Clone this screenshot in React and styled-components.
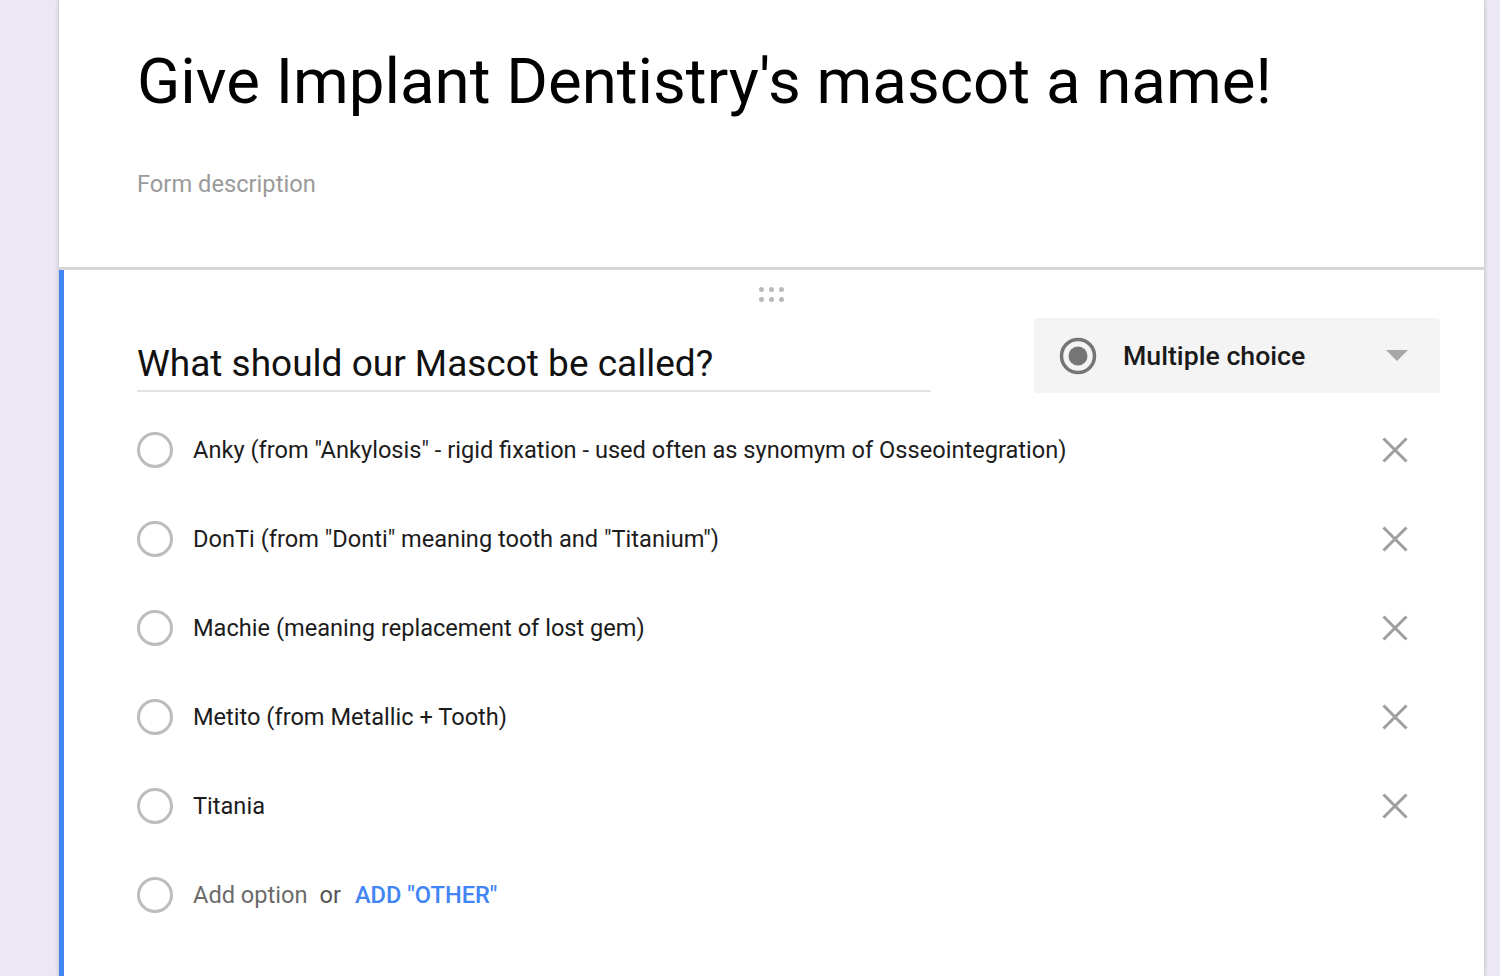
import React from "react";
import styled, { createGlobalStyle } from "styled-components";

const GlobalStyle = createGlobalStyle`
  html, body {
    margin: 0;
    padding: 0;
    background: #ebe7f4;
    font-family: Roboto, "Liberation Sans", Arial, sans-serif;
    overflow: hidden;
  }
`;

const options = [
  'Anky (from "Ankylosis" - rigid fixation - used often as synomym of Osseointegration)',
  'DonTi (from "Donti" meaning tooth and "Titanium")',
  "Machie (meaning replacement of lost gem)",
  "Metito (from Metallic + Tooth)",
  "Titania",
];

function App() {
  return (
    <>
      <GlobalStyle />
      <Page>
        <HeaderCard>
          <Title>Give Implant Dentistry's mascot a name!</Title>
          <Description>Form description</Description>
        </HeaderCard>
        <QuestionCard>
          <DragHandle>
            {Array.from({ length: 6 }).map((_, i) => (
              <Dot key={i} />
            ))}
          </DragHandle>
          <QuestionRow>
            <QuestionTitle>What should our Mascot be called?</QuestionTitle>
            <TypeSelect>
              <svg width="38" height="38" viewBox="0 0 38 38">
                <circle cx="19" cy="19" r="16.5" fill="none" stroke="#757575" strokeWidth="3.5" />
                <circle cx="19" cy="19" r="9.5" fill="#757575" />
              </svg>
              <TypeLabel>Multiple choice</TypeLabel>
              <svg width="22" height="11" viewBox="0 0 22 11">
                <path d="M0 0 L22 0 L11 11 Z" fill="#a6a6a6" />
              </svg>
            </TypeSelect>
          </QuestionRow>
          <OptionList>
            {options.map((text) => (
              <OptionRow key={text}>
                <Radio />
                <OptionText>{text}</OptionText>
                <RemoveButton>
                  <svg width="26" height="26" viewBox="0 0 26 26">
                    <path d="M1.5 1.5 L24.5 24.5 M24.5 1.5 L1.5 24.5" stroke="#9e9e9e" strokeWidth="3" />
                  </svg>
                </RemoveButton>
              </OptionRow>
            ))}
            <OptionRow>
              <Radio />
              <OptionText $muted>Add option</OptionText>
              <OrText>or</OrText>
              <AddOther>ADD "OTHER"</AddOther>
            </OptionRow>
          </OptionList>
        </QuestionCard>
      </Page>
    </>
  );
}

export default App;

const Page = styled.div`
  margin-left: 59px;
  width: 1425px;
  height: 976px;
  display: flex;
  flex-direction: column;
  box-shadow: 0 0 4px rgba(0, 0, 0, 0.25);
`;

const HeaderCard = styled.div`
  background: #fff;
  height: 270px;
  padding-left: 78px;
  box-sizing: border-box;
  border-bottom: 3px solid #d6d6d6;
  display: flex;
  flex-direction: column;
`;

const Title = styled.h1`
  margin: 42px 0 0;
  font-size: 63.6px;
  font-weight: 400;
  color: #000;
  line-height: 80px;
`;

const Description = styled.div`
  margin-top: 48px;
  font-size: 23.7px;
  color: #9a9a9a;
`;

const QuestionCard = styled.div`
  flex: 1;
  background: #fff;
  border-left: 5px solid #4285f4;
  padding: 0 44px 0 73px;
  display: flex;
  flex-direction: column;
`;

const DragHandle = styled.div`
  align-self: center;
  margin: 17px 0 0 -34px;
  display: grid;
  grid-template-columns: repeat(3, 5px);
  gap: 5px 5px;
`;

const Dot = styled.span`
  width: 5px;
  height: 5px;
  border-radius: 50%;
  background: #b8b8b8;
`;

const QuestionRow = styled.div`
  display: flex;
  align-items: flex-start;
  justify-content: space-between;
  margin-top: 16px;
`;

const QuestionTitle = styled.div`
  width: 794px;
  margin-top: 23px;
  padding-bottom: 3px;
  border-bottom: 2px solid #e3e3e3;
  font-size: 37px;
  color: #111;
  line-height: 46px;
`;

const TypeSelect = styled.div`
  width: 406px;
  height: 75px;
  box-sizing: border-box;
  background: #f4f4f4;
  border-radius: 4px;
  display: flex;
  align-items: center;
  padding: 0 32px 0 25px;
`;

const TypeLabel = styled.span`
  flex: 1;
  margin-left: 26px;
  font-size: 26.7px;
  font-weight: 500;
  color: #1a1a1a;
`;

const OptionList = styled.div`
  display: flex;
  flex-direction: column;
  margin-top: 12px;
`;

const OptionRow = styled.div`
  height: 89px;
  display: flex;
  align-items: center;
`;

const Radio = styled.span`
  width: 30px;
  height: 30px;
  border: 3px solid #bdbdbd;
  border-radius: 50%;
  flex-shrink: 0;
`;

const OptionText = styled.span`
  margin-left: 20px;
  font-size: 23.6px;
  color: ${(p) => (p.$muted ? "#6b6b6b" : "#1c1c1c")};
  flex: ${(p) => (p.$muted ? "none" : "1")};
`;

const OrText = styled.span`
  margin-left: 12px;
  font-size: 23.6px;
  color: #555;
`;

const AddOther = styled.span`
  margin-left: 14px;
  font-size: 23.6px;
  font-weight: 500;
  color: #4285f4;
`;

const RemoveButton = styled.span`
  width: 26px;
  height: 26px;
  display: flex;
  margin-right: 32px;
`;
